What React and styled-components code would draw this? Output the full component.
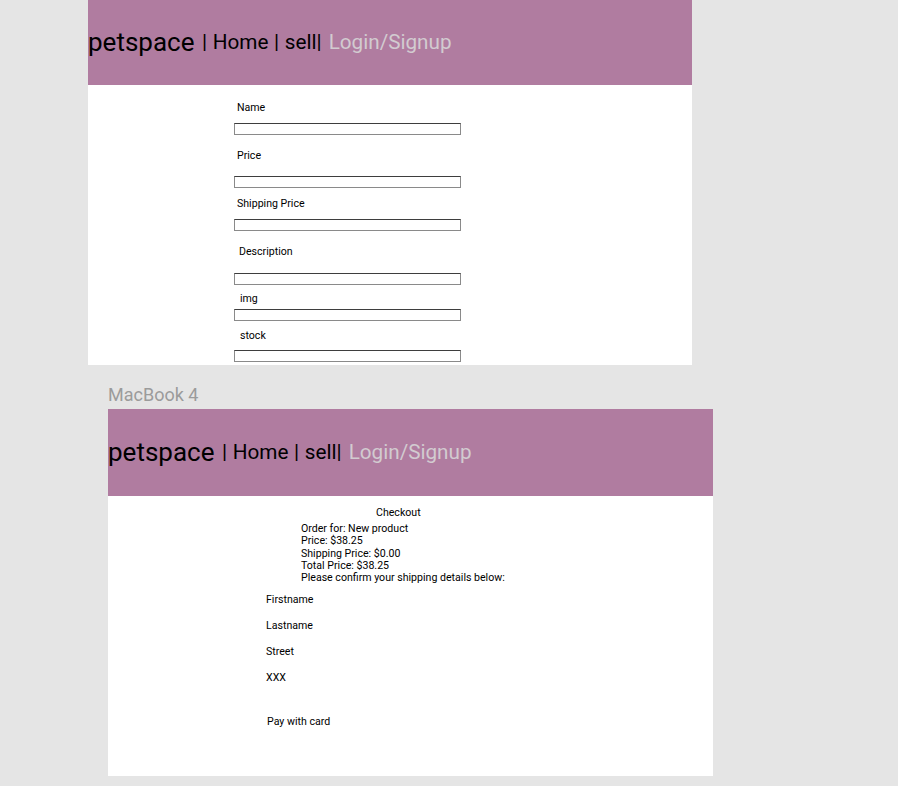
import React from "react";
import styled, { createGlobalStyle } from "styled-components";

const Global = createGlobalStyle`
  html, body { margin: 0; padding: 0; background: #e5e5e5; }
  body { font-family: Roboto, "Liberation Sans", Arial, sans-serif; }
  * { box-sizing: border-box; }
`;

const Canvas = styled.div`
  display: flex;
  flex-direction: column;
  align-items: flex-start;
  width: 898px;
  min-height: 786px;
  background: #e5e5e5;
`;

const Frame = styled.div`
  margin-left: ${(p) => p.$left}px;
  width: ${(p) => p.$width}px;
  height: ${(p) => p.$height}px;
  background: #ffffff;
  display: flex;
  flex-direction: column;
`;

const FrameLabel = styled.div`
  margin: 19px 0 4px 108px;
  font-size: 18px;
  line-height: 21px;
  color: #9b9b9b;
`;

const Header = styled.header`
  height: ${(p) => p.$height}px;
  background: #b07ca0;
  display: flex;
  align-items: center;
  padding-bottom: 2px;
  white-space: pre;
  flex-shrink: 0;
`;

const Brand = styled.span`
  font-size: 26px;
  color: #000;
`;

const NavText = styled.span`
  font-size: 20.7px;
  color: #000;
  margin-left: 2px;
  word-spacing: 0.5px;
`;

const NavMuted = styled.span`
  font-size: 20.7px;
  color: #d2cbd0;
  margin-left: 2px;
`;

const SellForm = styled.div`
  display: flex;
  flex-direction: column;
  align-items: flex-start;
  padding: 16px 0 0 146px;
`;

const FieldLabel = styled.label`
  font-size: 10.6px;
  line-height: 13px;
  color: #000;
  margin-top: ${(p) => p.$top || 0}px;
  margin-left: ${(p) => p.$indent || 3}px;
`;

const Input = styled.div`
  width: 227px;
  height: 12px;
  border: 1px solid #8a8a8a;
  border-top-color: #3e3e3e;
  background: #fff;
  margin-top: ${(p) => p.$top || 0}px;
`;

const Checkout = styled.div`
  display: flex;
  flex-direction: column;
  align-items: flex-start;
  padding-top: 10px;
  font-size: 10.6px;
  color: #000;
`;

const Title = styled.div`
  margin-left: 268px;
  line-height: 13px;
`;

const Summary = styled.div`
  margin: 4px 0 0 193px;
  line-height: 12.3px;
`;

const ShipLine = styled.div`
  margin-left: ${(p) => p.$left || 158}px;
  margin-top: ${(p) => p.$top}px;
  line-height: 13px;
`;

const sellFields = [
  { label: "Name", lt: 0, it: 9, indent: 3 },
  { label: "Price", lt: 13.5, it: 14.5, indent: 3 },
  { label: "Shipping Price", lt: 8.5, it: 9.5, indent: 3 },
  { label: "Description", lt: 13.5, it: 15.5, indent: 5 },
  { label: "img", lt: 6.5, it: 4.5, indent: 6 },
  { label: "stock", lt: 7.5, it: 8.5, indent: 6 },
];

function TopBar({ height }) {
  return (
    <Header $height={height}>
      <Brand>petspace</Brand>
      <NavText> | Home | sell|</NavText>
      <NavMuted> Login/Signup</NavMuted>
    </Header>
  );
}

export default function App() {
  return (
    <>
      <Global />
      <Canvas>
        <Frame $left={88} $width={604} $height={365}>
          <TopBar height={85} />
          <SellForm>
            {sellFields.map((f) => (
              <React.Fragment key={f.label}>
                <FieldLabel $top={f.lt} $indent={f.indent}>
                  {f.label}
                </FieldLabel>
                <Input $top={f.it} />
              </React.Fragment>
            ))}
          </SellForm>
        </Frame>
        <FrameLabel>MacBook 4</FrameLabel>
        <Frame $left={108} $width={605} $height={367}>
          <TopBar height={87} />
          <Checkout>
            <Title>Checkout</Title>
            <Summary>
              <div>Order for: New product</div>
              <div>Price: $38.25</div>
              <div>Shipping Price: $0.00</div>
              <div>Total Price: $38.25</div>
              <div>Please confirm your shipping details below:</div>
            </Summary>
            <ShipLine $top={9}>Firstname</ShipLine>
            <ShipLine $top={13}>Lastname</ShipLine>
            <ShipLine $top={13}>Street</ShipLine>
            <ShipLine $top={13}>XXX</ShipLine>
            <ShipLine $top={31} $left={159}>Pay with card</ShipLine>
          </Checkout>
        </Frame>
      </Canvas>
    </>
  );
}
